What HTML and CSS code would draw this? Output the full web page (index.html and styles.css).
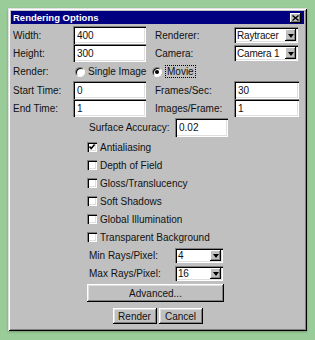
FILE: index.html
```html
<!DOCTYPE html>
<html lang="en">
<head>
    <title>Rendering Options</title>
    <link rel="stylesheet" href="styles.css">
</head>
<body>
    <div class="dialog">
        <div class="titlebar">
            <span class="title">Rendering Options</span>
            <span class="close">
                <svg width="7" height="6" viewBox="0 0 7 6">
                    <path d="M0.5 0.5 L6.5 5.5 M6.5 0.5 L0.5 5.5" stroke="#000" stroke-width="1.4"/>
                </svg>
            </span>
        </div>
        <div class="content">
            <div class="top_grid">
                <span class="lbl">Width:</span>
                <input class="field" type="text" value="400">
                <span class="lbl lbl_right">Renderer:</span>
                <div class="select wide"><span>Raytracer</span><span class="arrow"></span></div>

                <span class="lbl">Height:</span>
                <input class="field" type="text" value="300">
                <span class="lbl lbl_right">Camera:</span>
                <div class="select wide"><span>Camera 1</span><span class="arrow"></span></div>

                <span class="lbl">Render:</span>
                <div class="radios">
                    <span class="option"><span class="radio"></span>Single Image</span>
                    <span class="option"><span class="radio checked"></span><span class="focus">Movie</span></span>
                </div>

                <span class="lbl">Start Time:</span>
                <input class="field" type="text" value="0">
                <span class="lbl lbl_right">Frames/Sec:</span>
                <input class="field" type="text" value="30">

                <span class="lbl">End Time:</span>
                <input class="field" type="text" value="1">
                <span class="lbl lbl_right">Images/Frame:</span>
                <input class="field" type="text" value="1">
            </div>

            <div class="center">
                <div class="pair surface">
                    <span class="lbl">Surface Accuracy:</span>
                    <input class="field" type="text" value="0.02">
                </div>

                <div class="checks">
                    <div class="check">
                        <span class="box">
                            <svg width="10" height="10" viewBox="0 0 10 10">
                                <path d="M2.5 4.5 L4.2 6.6 L7.6 2.6" fill="none" stroke="#000" stroke-width="1.6"/>
                            </svg>
                        </span>Antialiasing
                    </div>
                    <div class="check"><span class="box"></span>Depth of Field</div>
                    <div class="check"><span class="box"></span>Gloss/Translucency</div>
                    <div class="check"><span class="box"></span>Soft Shadows</div>
                    <div class="check"><span class="box"></span>Global Illumination</div>
                    <div class="check"><span class="box"></span>Transparent Background</div>
                </div>

                <div class="pair rays">
                    <span class="lbl">Min Rays/Pixel:</span>
                    <div class="select small"><span>4</span><span class="arrow"></span></div>
                </div>
                <div class="pair rays">
                    <span class="lbl">Max Rays/Pixel:</span>
                    <div class="select small"><span>16</span><span class="arrow"></span></div>
                </div>

                <button type="button" class="btn advanced">Advanced...</button>
            </div>

            <div class="actions">
                <button type="button" class="btn">Render</button>
                <button type="button" class="btn">Cancel</button>
            </div>
        </div>
    </div>
</body>
</html>
```

FILE: styles.css
```css
body {
    margin: 0;
    padding: 8px;
    background-color: #99cc99;
    font-family: "Liberation Sans", Arial, sans-serif;
    font-size: 10px;
    color: #111;
}
.dialog {
    width: 299px;
    height: 323px;
    box-sizing: border-box;
    padding: 3px;
    background-color: #c0c0c0;
    box-shadow: inset 1px 1px #dfdfdf, inset -1px -1px #000, inset 2px 2px #fff, inset -2px -2px #808080, 0 1px 2px rgba(0, 0, 0, 0.25);
}
.titlebar {
    height: 13px;
    background-color: #000080;
    color: #fff;
    display: flex;
    align-items: center;
    justify-content: space-between;
    padding-left: 2px;
    padding-right: 3px;
}
.title {
    font-weight: bold;
    font-size: 9.5px;
}
.close {
    width: 11px;
    height: 10px;
    display: flex;
    align-items: center;
    justify-content: center;
    background-color: #c0c0c0;
    box-shadow: inset -1px -1px #000, inset 1px 1px #fff, inset -2px -2px #808080;
}
.content {
    padding-top: 2px;
}
.top_grid {
    display: grid;
    grid-template-columns: 60px 73px 88px 65px;
    grid-template-rows: 18px 18px 19px 18px 18px;
    align-items: center;
    padding-left: 2px;
}
.lbl_right {
    padding-left: 9px;
}
.field {
    height: 18px;
    width: 100%;
    box-sizing: border-box;
    margin: 0;
    padding: 0 2px 0 4px;
    border: none;
    outline: none;
    background-color: #fff;
    font: inherit;
    color: #111;
    box-shadow: inset 1px 1px #808080, inset 2px 2px #000, inset -1px -1px #fff, inset -2px -2px #dfdfdf;
}
.select {
    height: 16px;
    box-sizing: border-box;
    padding: 2px 2px 2px 3px;
    display: flex;
    align-items: center;
    background-color: #fff;
    box-shadow: inset 1px 1px #808080, inset 2px 2px #000, inset -1px -1px #fff, inset -2px -2px #dfdfdf;
    overflow: hidden;
}
.select span:first-child {
    white-space: nowrap;
    letter-spacing: -0.2px;
}
.select.wide {
    width: 64px;
}
.select.small {
    width: 48px;
    height: 15px;
}
.arrow {
    margin-left: auto;
    flex: none;
    width: 11px;
    height: 100%;
    background-color: #c0c0c0;
    box-shadow: inset -1px -1px #000, inset 1px 1px #fff, inset -2px -2px #808080;
    display: flex;
    align-items: center;
    justify-content: center;
}
.arrow::after {
    content: "";
    border-left: 3.5px solid transparent;
    border-right: 3.5px solid transparent;
    border-top: 4px solid #000;
    margin-top: 1px;
}
.radios {
    grid-column: 2 / 5;
    display: flex;
    align-items: center;
    padding-left: 2px;
}
.option {
    display: flex;
    align-items: center;
    gap: 3px;
    width: 77px;
}
.radio {
    width: 8px;
    height: 8px;
    border-radius: 50%;
    background-color: #fff;
    border: 1px solid;
    border-color: #808080 #fff #fff #808080;
    box-shadow: inset 1px 1px #000;
    display: flex;
    align-items: center;
    justify-content: center;
}
.radio.checked::after {
    content: "";
    width: 4px;
    height: 4px;
    border-radius: 50%;
    background-color: #000;
}
.focus {
    border: 1px dotted #000;
    padding: 0 1px;
    line-height: 11px;
}
.center {
    margin-left: 76px;
    width: 137px;
}
.pair {
    display: grid;
    align-items: center;
}
.pair .lbl {
    padding-left: 2px;
}
.surface {
    margin-top: 1px;
    height: 19px;
    grid-template-columns: 88px 53px;
}
.surface .field {
    height: 19px;
}
.checks {
    margin-top: 1px;
}
.check {
    height: 18px;
    display: flex;
    align-items: center;
    gap: 3px;
}
.box {
    width: 10px;
    height: 10px;
    background-color: #fff;
    box-shadow: inset 1px 1px #808080, inset 2px 2px #000, inset -1px -1px #fff, inset -2px -2px #dfdfdf;
}
.box svg {
    display: block;
}
.rays {
    height: 18px;
    grid-template-columns: 88px 48px;
}
.btn {
    margin: 0;
    padding: 0;
    border: none;
    font: inherit;
    color: #111;
    background-color: #c0c0c0;
    box-shadow: inset -1px -1px #000, inset 1px 1px #fff, inset -2px -2px #808080, inset 2px 2px #dfdfdf;
    width: 44px;
    height: 16px;
}
.advanced {
    display: block;
    margin-top: 2px;
    width: 137px;
    height: 18px;
}
.actions {
    margin-top: 6px;
    display: flex;
    justify-content: center;
    gap: 2px;
}
```
